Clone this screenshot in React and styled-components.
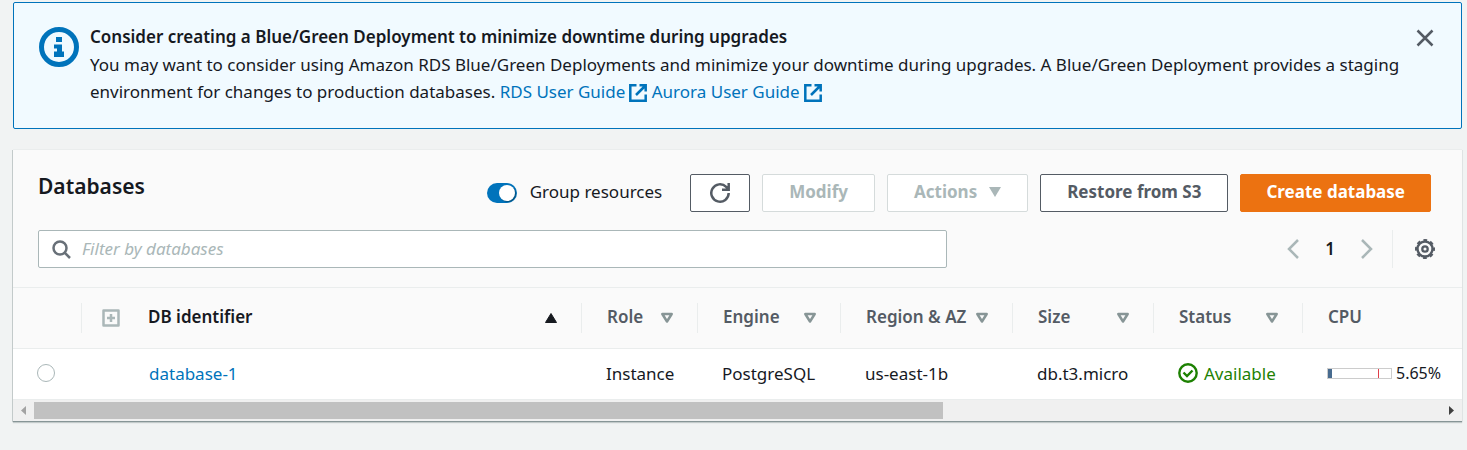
import React from "react";
import styled, { createGlobalStyle, css } from "styled-components";

const GlobalStyle = createGlobalStyle`
  *, *::before, *::after { box-sizing: border-box; }
  body {
    margin: 0;
    background: #f1f3f3;
    color: #16191f;
    font-family: "Noto Sans", "Open Sans", sans-serif;
    font-size: 17px;
    line-height: 27px;
  }
  button, input { font: inherit; color: inherit; margin: 0; }
  svg { display: block; flex: none; }
`;

const Page = styled.main`
  display: flex;
  flex-direction: column;
  gap: 20px;
  padding: 2px 5px 28px 13px;
`;

const Banner = styled.section`
  display: flex;
  align-items: flex-start;
  gap: 11px;
  padding: 20px 26px 23px 25px;
  background: #f1faff;
  border: 1px solid #0073bb;
  border-radius: 2px;
`;

const BannerIcon = styled.span`
  padding-top: 4px;
`;

const BannerBody = styled.div`
  flex: 1;
  min-width: 0;
`;

const BannerTitle = styled.h2`
  margin: 0;
  font-size: 17px;
  line-height: 28px;
  font-weight: 600;
`;

const BannerText = styled.p`
  margin: 0;
`;

const Link = styled.a`
  color: #0073bb;
  text-decoration: none;
`;

const ExternalMark = styled.svg`
  display: inline-block;
  vertical-align: -4px;
  margin-left: 4px;
`;

const IconButton = styled.button`
  display: flex;
  align-items: center;
  justify-content: center;
  padding: 0;
  border: 0;
  background: transparent;
  color: ${(p) => (p.disabled ? "#aab7b8" : "#545b64")};
`;

const CloseButton = styled(IconButton)`
  width: 20px;
  height: 30px;
`;

const Panel = styled.section`
  background: #fff;
  border-top: 1px solid #eaeded;
  box-shadow: 0 1px 0 #879596, -1px 1px 0 #c3caca, 1px 1px 0 #dfe3e3, 0 2px 1px #c3caca;
`;

const PanelHeader = styled.header`
  display: flex;
  flex-direction: column;
  gap: 18px;
  padding: 24px 25px 19px;
  background: #fafafa;
  border-bottom: 1px solid #eaeded;
`;

const HeaderRow = styled.div`
  display: flex;
  align-items: center;
  justify-content: space-between;
`;

const Title = styled.h1`
  margin: 0;
  padding-bottom: 14px;
  font-size: 21px;
  line-height: 24px;
  font-weight: 600;
`;

const Actions = styled.div`
  display: flex;
  align-items: center;
  gap: 12px;
  padding-right: 6px;
`;

const ToggleLabel = styled.label`
  display: flex;
  align-items: center;
  gap: 13px;
  margin-right: 16px;
`;

const ToggleText = styled.span`
  padding-bottom: 3px;
`;

const Toggle = styled.input`
  appearance: none;
  display: flex;
  justify-content: flex-end;
  width: 30px;
  height: 20px;
  padding: 2px;
  border-radius: 10px;
  background: #0073bb;
  &::after {
    content: "";
    width: 16px;
    height: 16px;
    border-radius: 50%;
    background: #fff;
    box-shadow: 1px 1px 1px rgba(0, 28, 36, 0.4);
  }
`;

const variants = {
  normal: css`
    background: #fff;
    border-color: #545b64;
    color: #545b64;
  `,
  disabled: css`
    background: #fff;
    border-color: #d5dbdb;
    color: #aab7b8;
  `,
  primary: css`
    padding: 0 25px 3px;
    background: #ec7211;
    border-color: #ec7211;
    color: #fff;
  `,
};

const Button = styled.button`
  display: flex;
  align-items: center;
  justify-content: center;
  gap: 12px;
  height: 38px;
  min-width: 60px;
  padding: ${(p) => (p.$icon ? "0 19px" : "0 26px 3px")};
  border: 1px solid;
  border-radius: 2px;
  font-weight: 700;
  white-space: nowrap;
  ${(p) => variants[p.$variant || "normal"]}
`;

const Search = styled.label`
  display: flex;
  align-items: center;
  gap: 11px;
  flex: 0 0 65%;
  height: 38px;
  padding: 0 13px;
  background: #fff;
  border: 1px solid #aab7b8;
  border-radius: 2px;
  color: #687078;
`;

const SearchInput = styled.input`
  flex: 1;
  min-width: 0;
  padding: 0 0 2px;
  border: 0;
  outline: 0;
  background: transparent;
  color: #16191f;
  &::placeholder {
    color: #aab7b8;
    font-style: italic;
    opacity: 1;
  }
`;

const Pager = styled.nav`
  display: flex;
  align-items: center;
  height: 38px;
`;

const PageNumber = styled.span`
  width: 62px;
  padding-bottom: 2px;
  text-align: center;
  font-weight: 600;
`;

const PagerSettings = styled.div`
  display: flex;
  align-items: center;
  height: 38px;
  margin-left: 19px;
  padding: 0 2px 0 22px;
  border-left: 1px solid #eaeded;
`;

const Table = styled.table`
  width: 100%;
  table-layout: fixed;
  border-collapse: separate;
  border-spacing: 0;
`;

const Col = styled.col`
  width: ${(p) => p.$width || "auto"};
`;

const HeadCell = styled.th`
  height: 61px;
  padding: 0;
  background: #fafafa;
  border-bottom: 1px solid #eaeded;
  text-align: left;
  font-weight: 600;
  color: ${(p) => (p.$active ? "#16191f" : "#545b64")};
`;

const HeadInner = styled.div`
  display: flex;
  align-items: center;
  height: 30px;
  padding-left: ${(p) => (p.$tree ? "20px" : "25px")};
  border-right: ${(p) => (p.$last ? "0" : "1px solid #eaeded")};
`;

const HeadText = styled.span`
  padding-bottom: 3px;
`;

const SortButton = styled.button`
  display: flex;
  flex: 1;
  align-items: center;
  justify-content: space-between;
  padding: 0 23px 0 0;
  border: 0;
  background: transparent;
  font-weight: 600;
  white-space: nowrap;
`;

const ExpandButton = styled(IconButton)`
  color: #aab7b8;
  margin-right: 28px;
`;

const Cell = styled.td`
  height: 51px;
  padding: 0 0 2px ${(p) => (p.$tree ? "67px" : "24px")};
  border-bottom: 1px solid #eaeded;
  white-space: nowrap;
`;

const Radio = styled.input`
  appearance: none;
  display: block;
  width: 18px;
  height: 18px;
  border: 1px solid #aab7b8;
  border-radius: 50%;
  background: #fff;
`;

const Status = styled.span`
  display: flex;
  align-items: center;
  gap: 6px;
  color: #1d8102;
`;

const Usage = styled.span`
  display: flex;
  align-items: center;
  gap: 4px;
  font-size: 16px;
`;

const Meter = styled.span`
  display: flex;
  justify-content: space-between;
  width: 65px;
  height: 11px;
  padding-right: 12px;
  border: 1px solid #ccc;
`;

const MeterFill = styled.span`
  width: 4px;
  background: #486b8f;
`;

const MeterLimit = styled.span`
  width: 1px;
  background: #e0404a;
`;

const ScrollBar = styled.div`
  display: flex;
  align-items: center;
  height: 21px;
  background: #f0f0f0;
`;

const ScrollArrow = styled(IconButton)`
  width: 21px;
  height: 21px;
  color: ${(p) => (p.disabled ? "#a3a3a3" : "#404040")};
`;

const ScrollTrack = styled.div`
  flex: 1;
`;

const ScrollThumb = styled.div`
  width: ${(p) => p.$size};
  height: 17px;
  background: #c1c1c1;
`;

const External = () => (
  <ExternalMark width="18" height="18" viewBox="0 0 18 18" fill="none" stroke="currentColor" strokeWidth="2.500" aria-hidden="true">
    <path d="M7.500 1.300H1.300v15.400h15.400v-6.200M10.500 1.300h6.200v6.200M16.500 1.500 7 11" />
  </ExternalMark>
);

const SortMark = ({ active }) =>
  active ? (
    <svg width="14" height="12" viewBox="0 0 14 12" aria-hidden="true">
      <path d="M7 1.500 12.500 10.500h-11Z" fill="currentColor" stroke="currentColor" strokeWidth="1" strokeLinejoin="round" />
    </svg>
  ) : (
    <svg width="14" height="12" viewBox="0 0 14 12" fill="none" stroke="#879596" strokeWidth="2.500" strokeLinejoin="round" aria-hidden="true">
      <path d="M2.300 2h9.400L7 9.500Z" />
    </svg>
  );

const columns = [
  { label: "Role", width: "116px" },
  { label: "Engine", width: "143px" },
  { label: "Region & AZ", width: "172px" },
  { label: "Size", width: "141px" },
  { label: "Status", width: "149px" },
];

const databases = [
  {
    id: "database-1",
    role: "Instance",
    engine: "PostgreSQL",
    zone: "us-east-1b",
    size: "db.t3.micro",
    status: "Available",
    cpu: "5.65%",
  },
];

function InfoBanner() {
  return (
    <Banner>
      <BannerIcon>
        <svg width="40" height="40" viewBox="0 0 40 40" aria-hidden="true">
          <circle cx="20" cy="20" r="17.500" fill="none" stroke="#0073bb" strokeWidth="5" />
          <path d="M17 10h6v5h-6ZM15 17.500h8v7h2V30H15v-5.500h3v-3h-3Z" fill="#0073bb" />
        </svg>
      </BannerIcon>
      <BannerBody>
        <BannerTitle>Consider creating a Blue/Green Deployment to minimize downtime during upgrades</BannerTitle>
        <BannerText>
          You may want to consider using Amazon RDS Blue/Green Deployments and minimize your downtime during upgrades. A
          Blue/Green Deployment provides a staging environment for changes to production databases.{" "}
          <Link href="#rds">RDS User Guide<External /></Link> <Link href="#aurora">Aurora User Guide<External /></Link>
        </BannerText>
      </BannerBody>
      <CloseButton type="button" aria-label="Dismiss">
        <svg width="18" height="18" viewBox="0 0 18 18" stroke="currentColor" strokeWidth="2.500" aria-hidden="true">
          <path d="m1.500 1.500 15 15m0-15-15 15" />
        </svg>
      </CloseButton>
    </Banner>
  );
}

function Toolbar() {
  return (
    <PanelHeader>
      <HeaderRow>
        <Title>Databases</Title>
        <Actions>
          <ToggleLabel>
            <Toggle type="checkbox" role="switch" defaultChecked />
            <ToggleText>Group resources</ToggleText>
          </ToggleLabel>
          <Button type="button" $icon aria-label="Refresh">
            <svg width="20" height="20" viewBox="0 0 20 20" fill="none" stroke="currentColor" strokeWidth="2.500" aria-hidden="true">
              <path d="M18.700 10A8.700 8.700 0 1 1 16.200 3.900L18 6M18.700 0v6.700H12" />
            </svg>
          </Button>
          <Button type="button" disabled $variant="disabled">Modify</Button>
          <Button type="button" disabled $variant="disabled">
            Actions
            <svg width="12" height="11" viewBox="0 0 12 11" fill="currentColor" aria-hidden="true">
              <path d="M0 1h12L6 11Z" />
            </svg>
          </Button>
          <Button type="button">Restore from S3</Button>
          <Button type="button" $variant="primary">Create database</Button>
        </Actions>
      </HeaderRow>
      <HeaderRow>
        <Search>
          <svg width="19" height="19" viewBox="0 0 19 19" fill="none" stroke="currentColor" strokeWidth="2.500" aria-hidden="true">
            <circle cx="8" cy="8" r="6.500" />
            <path d="m12.500 12.500 5.500 5.500" />
          </svg>
          <SearchInput type="text" placeholder="Filter by databases" aria-label="Filter by databases" />
        </Search>
        <Pager aria-label="Pages">
          <IconButton type="button" disabled aria-label="Previous page">
            <svg width="12" height="20" viewBox="0 0 12 20" fill="none" stroke="currentColor" strokeWidth="2.500" aria-hidden="true">
              <path d="m11 1-9 9 9 9" />
            </svg>
          </IconButton>
          <PageNumber>1</PageNumber>
          <IconButton type="button" disabled aria-label="Next page">
            <svg width="12" height="20" viewBox="0 0 12 20" fill="none" stroke="currentColor" strokeWidth="2.500" aria-hidden="true">
              <path d="m1 1 9 9-9 9" />
            </svg>
          </IconButton>
          <PagerSettings>
            <IconButton type="button" aria-label="Preferences">
              <svg width="20" height="20" viewBox="0 0 20 20" fill="none" stroke="currentColor" aria-hidden="true">
                <circle cx="10" cy="10" r="7.500" strokeWidth="2.400" />
                <circle cx="10" cy="10" r="9" strokeWidth="2" strokeDasharray="3.800 3.269" strokeDashoffset="1.900" />
                <circle cx="10" cy="10" r="2.700" strokeWidth="2.300" />
              </svg>
            </IconButton>
          </PagerSettings>
        </Pager>
      </HeaderRow>
    </PanelHeader>
  );
}

function DatabaseTable() {
  return (
    <Table>
      <colgroup>
        <Col $width="69px" />
        <Col />
        {columns.map((c) => (
          <Col key={c.label} $width={c.width} />
        ))}
        <Col $width="159px" />
      </colgroup>
      <thead>
        <tr>
          <HeadCell aria-label="Select"><HeadInner /></HeadCell>
          <HeadCell $active aria-sort="ascending">
            <HeadInner $tree>
              <ExpandButton type="button" aria-label="Expand all">
                <svg width="18" height="18" viewBox="0 0 18 18" fill="none" stroke="currentColor" aria-hidden="true">
                  <path d="M1.500 1.500h15v15h-15Z" strokeWidth="2.500" strokeLinejoin="round" />
                  <path d="M9 5v8M5 9h8" strokeWidth="2.500" />
                </svg>
              </ExpandButton>
              <SortButton type="button"><HeadText>DB identifier</HeadText><SortMark active /></SortButton>
            </HeadInner>
          </HeadCell>
          {columns.map((c) => (
            <HeadCell key={c.label}>
              <HeadInner>
                <SortButton type="button"><HeadText>{c.label}</HeadText><SortMark /></SortButton>
              </HeadInner>
            </HeadCell>
          ))}
          <HeadCell><HeadInner $last><HeadText>CPU</HeadText></HeadInner></HeadCell>
        </tr>
      </thead>
      <tbody>
        {databases.map((d) => (
          <tr key={d.id}>
            <Cell><Radio type="radio" name="database" aria-label={d.id} /></Cell>
            <Cell $tree><Link href="#database-1">{d.id}</Link></Cell>
            <Cell>{d.role}</Cell>
            <Cell>{d.engine}</Cell>
            <Cell>{d.zone}</Cell>
            <Cell>{d.size}</Cell>
            <Cell>
              <Status>
                <svg width="20" height="20" viewBox="0 0 20 20" fill="none" stroke="currentColor" strokeWidth="2.400" aria-hidden="true">
                  <circle cx="10" cy="10" r="8.700" />
                  <path d="m5.500 9.500 3.500 3.500 5.500-5.500" />
                </svg>
                {d.status}
              </Status>
            </Cell>
            <Cell>
              <Usage>
                <Meter><MeterFill /><MeterLimit /></Meter>
                {d.cpu}
              </Usage>
            </Cell>
          </tr>
        ))}
      </tbody>
    </Table>
  );
}

function HorizontalScroll() {
  return (
    <ScrollBar>
      <ScrollArrow type="button" disabled aria-label="Scroll left">
        <svg width="5" height="9" viewBox="0 0 5 9" fill="currentColor" aria-hidden="true"><path d="M5 0v9L0 4.500Z" /></svg>
      </ScrollArrow>
      <ScrollTrack><ScrollThumb $size="64.6%" /></ScrollTrack>
      <ScrollArrow type="button" aria-label="Scroll right">
        <svg width="5" height="9" viewBox="0 0 5 9" fill="currentColor" aria-hidden="true"><path d="M0 0v9l5-4.500Z" /></svg>
      </ScrollArrow>
    </ScrollBar>
  );
}

export default function App() {
  return (
    <>
      <GlobalStyle />
      <Page>
        <InfoBanner />
        <Panel>
          <Toolbar />
          <DatabaseTable />
          <HorizontalScroll />
        </Panel>
      </Page>
    </>
  );
}
